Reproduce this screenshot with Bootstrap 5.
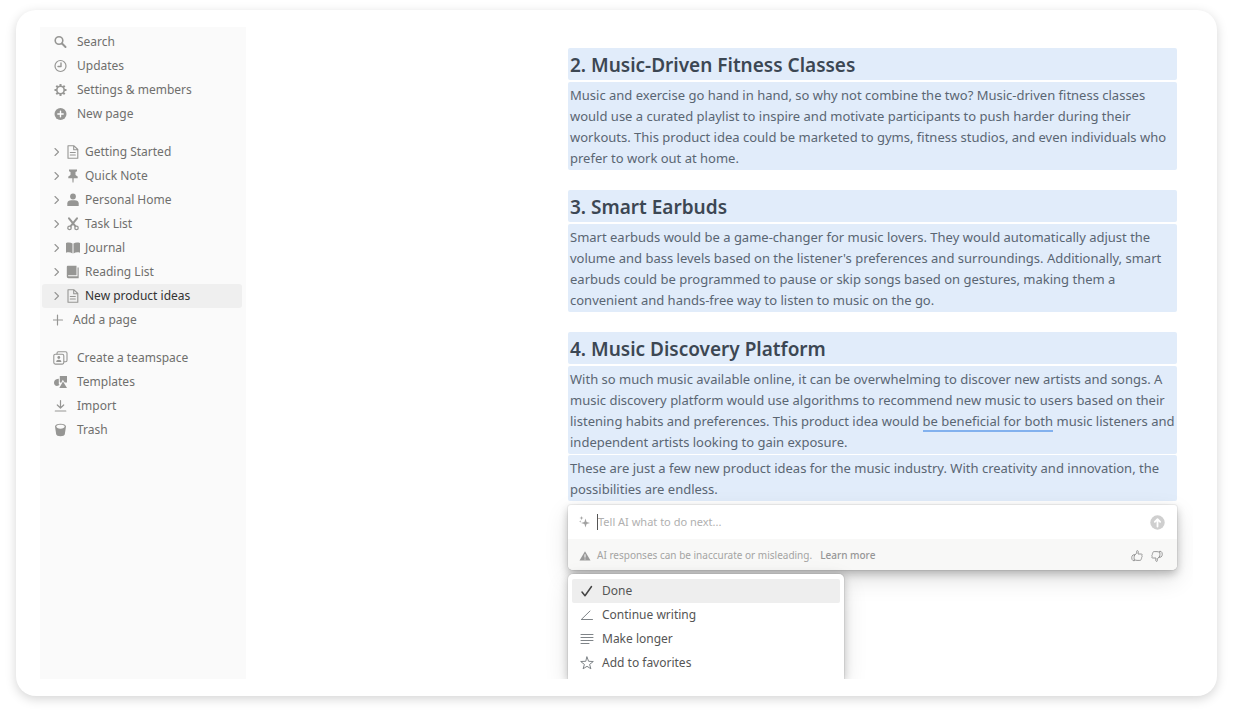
<!DOCTYPE html>
<html lang="en">
<head>
<meta charset="utf-8">
<meta name="viewport" content="width=device-width, initial-scale=1">
<title>New product ideas</title>
<link href="https://cdn.jsdelivr.net/npm/bootstrap@5.3.0/dist/css/bootstrap.min.css" rel="stylesheet">
<style>
  body { font-family: "Noto Sans", "Open Sans", sans-serif; background: #fff; color: #5a6673; }
  svg { display: block; flex: none; fill: none; stroke: currentColor; stroke-width: 1.4; stroke-linecap: round; stroke-linejoin: round; }
  svg .solid { fill: currentColor; stroke: none; }
  .app-window { margin: 10px 17px 23px 16px; padding: 17px 24px; border-radius: 20px; background: #fff; box-shadow: 0 3px 11px rgba(0,0,0,.17); }
  .side-panel { width: 206px; background: #fafafa; padding: 3px 4px 2px 2px; }
  .side-group + .side-group { margin-top: 14px; }
  .side-row { height: 24px; padding-left: 11px; font-size: 12px; line-height: 24px; border-radius: 3px; color: #6f6f6d; }
  .side-row svg { color: #969694; }
  .side-row a { color: inherit; text-decoration: none; }
  .side-row a.with-icon { gap: 9px; }
  .side-row.tree a.with-icon { gap: 5px; }
  .side-row.chosen { background: #efefef; color: #333; }
  .side-row .opener { border: 0; background: none; padding: 0 0 0 1px; width: 13px; }
  .main-area { overflow: hidden; min-width: 0; }
  .doc-column { width: 100%; max-width: 609px; margin: 21px 16px 0 auto; }
  .picked { background: #e1ecfa; border-radius: 2px; padding: 3px 2px 1px; margin: 0; }
  h2.picked { font-size: 19px; font-weight: 600; line-height: 28px; color: #3c4753; margin-bottom: 2px; }
  p.picked { font-size: 13px; line-height: 21px; }
  section + section { margin-top: 20px; }
  p.picked + p.picked { margin-top: 1px; }
  .hint-line { border-bottom: 2px solid #82b1ee; }
  .prompt-box { margin-top: 4px; background: #fff; border-radius: 3px 3px 5px 5px; overflow: hidden; box-shadow: 0 0 0 1px rgba(0,0,0,.05), 0 4px 9px rgba(0,0,0,.24), 0 9px 24px rgba(0,0,0,.12); }
  .prompt-row { height: 34px; padding: 0 12px 0 11px; }
  .prompt-row input { border: 0; outline: 0; padding: 0; background: none; font-size: 11px; color: #555; }
  .prompt-row input::placeholder { color: #b0b0b0; opacity: 1; }
  .text-caret { width: 1px; height: 16px; background: #555; margin-left: 7px; }
  .note-row { height: 31px; padding: 2px 14px 0 11px; background: #f8f8f7; font-size: 10px; color: #a4a4a3; }
  .note-words { margin-left: 6px; }
  .note-row a { color: #969696; font-weight: 500; text-decoration: none; }
  .plain-btn { border: 0; background: none; padding: 0; color: #8e8e8e; }
  .choice-menu { position: relative; width: 276px; margin-top: 4px; padding: 5px 4px 4px; background: #fff; border-radius: 5px 5px 0 0; box-shadow: 0 0 0 1px rgba(0,0,0,.05), 0 2px 8px rgba(0,0,0,.22), 0 9px 24px rgba(0,0,0,.12); }
  .choice-menu button { display: flex; align-items: center; gap: 8px; width: 100%; height: 24px; padding: 0 8px; border: 0; background: none; font-size: 12px; color: #555; text-align: left; border-radius: 2px; }
  .choice-menu button svg { color: #7f8488; stroke-width: 1; }
  .choice-menu button.current { background: #eeeeee; }
  .choice-menu button.current svg { color: #444; stroke-width: 1.5; }
</style>
</head>
<body>
<div class="app-window d-flex">
  <nav class="side-panel flex-shrink-0" aria-label="Workspace">
    <div class="side-group">
      <div class="side-row"><a href="#" class="with-icon d-flex align-items-center"><svg width="15" height="14" viewBox="0 0 15 14"><circle cx="6" cy="5.500" r="3.800" stroke-width="1.600"/><path d="M9 8.500 12.500 12" stroke-width="2"/></svg>Search</a></div>
      <div class="side-row"><a href="#" class="with-icon d-flex align-items-center"><svg width="15" height="14" viewBox="0 0 15 14"><circle cx="7.500" cy="7" r="5.500" stroke-width="1.200"/><path d="M8 4v3.500H5"/></svg>Updates</a></div>
      <div class="side-row"><a href="#" class="with-icon d-flex align-items-center"><svg width="15" height="14" viewBox="0 0 15 14"><circle cx="7.500" cy="7" r="3.700" stroke-width="1.600"/><path stroke-linecap="butt" stroke-width="2" d="M7.500 3.300V1M7.500 10.700V13M3.800 7H1.500M11.200 7h2.300M4.900 4.400 3.300 2.800M10.100 4.400l1.600-1.600M4.900 9.600l-1.600 1.600M10.100 9.600l1.600 1.600"/></svg>Settings &amp; members</a></div>
      <div class="side-row"><a href="#" class="with-icon d-flex align-items-center"><svg width="15" height="14" viewBox="0 0 15 14"><circle class="solid" cx="7.500" cy="7" r="6"/><path stroke="#fff" d="M7.500 4.300v5.400M4.800 7h5.400"/></svg>New page</a></div>
    </div>
    <div class="side-group">
      <div class="side-row tree d-flex align-items-center"><button class="opener" aria-label="Expand Getting Started"><svg width="6" height="8" viewBox="0 0 6 8"><path stroke-width="1.100" d="M1 .5 4.500 4 1 7.500"/></svg></button><a href="#" class="with-icon d-flex align-items-center"><svg width="14" height="14" viewBox="0 0 14 14"><path stroke-width="1.100" d="M2 .8h6l3.800 3.700v8.700H2zM7.700 1v3.800h4M4.300 7.500h5M4.300 10h5"/></svg>Getting Started</a></div>
      <div class="side-row tree d-flex align-items-center"><button class="opener" aria-label="Expand Quick Note"><svg width="6" height="8" viewBox="0 0 6 8"><path stroke-width="1.100" d="M1 .5 4.500 4 1 7.500"/></svg></button><a href="#" class="with-icon d-flex align-items-center"><svg width="14" height="14" viewBox="0 0 14 14"><path class="solid" d="M3 .5h8v1.800L9.500 3v3l2.200 1.400v1.800H7.700l-.2 4.300h-1l-.2-4.300h-4V7.400L4.500 6V3L3 2.300z"/></svg>Quick Note</a></div>
      <div class="side-row tree d-flex align-items-center"><button class="opener" aria-label="Expand Personal Home"><svg width="6" height="8" viewBox="0 0 6 8"><path stroke-width="1.100" d="M1 .5 4.500 4 1 7.500"/></svg></button><a href="#" class="with-icon d-flex align-items-center"><svg width="14" height="14" viewBox="0 0 14 14"><circle class="solid" cx="7" cy="3.500" r="2.900"/><path class="solid" d="M1.300 13v-2.500c0-2 1.700-3.200 4-3.200h3.400c2.300 0 4 1.200 4 3.200V13z"/></svg>Personal Home</a></div>
      <div class="side-row tree d-flex align-items-center"><button class="opener" aria-label="Expand Task List"><svg width="6" height="8" viewBox="0 0 6 8"><path stroke-width="1.100" d="M1 .5 4.500 4 1 7.500"/></svg></button><a href="#" class="with-icon d-flex align-items-center"><svg width="14" height="14" viewBox="0 0 14 14"><path stroke-width="2" d="M3 1.300 9.300 9.200M11 1.300 4.700 9.200"/><circle cx="3.500" cy="10.900" r="1.700" stroke-width="1.300"/><circle cx="10.500" cy="10.900" r="1.700" stroke-width="1.300"/></svg>Task List</a></div>
      <div class="side-row tree d-flex align-items-center"><button class="opener" aria-label="Expand Journal"><svg width="6" height="8" viewBox="0 0 6 8"><path stroke-width="1.100" d="M1 .5 4.500 4 1 7.500"/></svg></button><a href="#" class="with-icon d-flex align-items-center"><svg width="14" height="14" viewBox="0 0 14 14"><path class="solid" d="M0 2c2.500-.8 4.700-.6 6.500.4v10C4.500 11.300 2.300 11 0 11.800zM14 2c-2.500-.8-4.700-.6-6.500.4v10c2-1.100 4.200-1.400 6.500-.6z"/></svg>Journal</a></div>
      <div class="side-row tree d-flex align-items-center"><button class="opener" aria-label="Expand Reading List"><svg width="6" height="8" viewBox="0 0 6 8"><path stroke-width="1.100" d="M1 .5 4.500 4 1 7.500"/></svg></button><a href="#" class="with-icon d-flex align-items-center"><svg width="14" height="14" viewBox="0 0 14 14"><path class="solid" d="M2 .8h8.500v9.400H2.600c-.8 0-.8 1 0 1h8.900V2.500h1.200v10.700H2.500C1.400 13.200.8 12.500.8 11.500V2C.8 1.300 1.300.8 2 .8z"/></svg>Reading List</a></div>
      <div class="side-row tree chosen d-flex align-items-center"><button class="opener" aria-label="Expand New product ideas"><svg width="6" height="8" viewBox="0 0 6 8"><path stroke-width="1.100" d="M1 .5 4.500 4 1 7.500"/></svg></button><a href="#" class="with-icon d-flex align-items-center" aria-current="page"><svg width="14" height="14" viewBox="0 0 14 14"><path stroke-width="1.100" d="M2 .8h6l3.800 3.700v8.700H2zM7.700 1v3.800h4M4.300 7.500h5M4.300 10h5"/></svg>New product ideas</a></div>
      <div class="side-row"><a href="#" class="with-icon d-flex align-items-center"><svg width="11" height="12" viewBox="0 0 11 12"><path stroke-width="1.200" d="M4.500 1v10M-.5 6h10"/></svg>Add a page</a></div>
    </div>
    <div class="side-group">
      <div class="side-row"><a href="#" class="with-icon d-flex align-items-center"><svg width="15" height="14" viewBox="0 0 15 14"><rect x=".8" y="3.300" width="10" height="9.800" rx="1.500" stroke-width="1.100"/><path stroke-width="1.100" d="M4 3V2.200C4 1.400 4.500.8 5.300.8h7.200c.9 0 1.500.6 1.500 1.500v7c0 .9-.5 1.400-1.300 1.400h-1.600"/><circle class="solid" cx="5.800" cy="6.500" r="1.400"/><path class="solid" d="M3.200 11c0-1.500 1-2.300 2.600-2.300s2.600.8 2.600 2.300z"/></svg>Create a teamspace</a></div>
      <div class="side-row"><a href="#" class="with-icon d-flex align-items-center"><svg width="15" height="14" viewBox="0 0 15 14"><path class="solid" d="M6.800 1h7.200v6.500h-2.300L9.800 4.800 8 8 6.800 7zM5.800 3.800v5.400l.8.600C6 10.500 5 11 4 11 2.200 11 1 9.500 1 7.800c0-2 1.200-3.500 3.200-3.800zM10 6.500 14 13H6.300z"/></svg>Templates</a></div>
      <div class="side-row"><a href="#" class="with-icon d-flex align-items-center"><svg width="15" height="14" viewBox="0 0 15 14"><path stroke-width="1.200" d="M7.500 1.500v7.300M4.300 6l3.200 3 3.200-3M2.300 12h10.500"/></svg>Import</a></div>
      <div class="side-row"><a href="#" class="with-icon d-flex align-items-center"><svg width="15" height="14" viewBox="0 0 15 14"><path class="solid" fill-rule="evenodd" d="M2 3.500C2 1.800 4.300.7 7.500.7S13 1.800 13 3.500l-1.200 7.700c-.2 1.300-1.900 2-4.300 2s-4.100-.7-4.300-2zM3.300 3.600c0 1.200 1.800 2.100 4.200 2.100s4.200-.9 4.200-2.100-1.800-1.800-4.200-1.800-4.200.6-4.200 1.800z"/></svg>Trash</a></div>
    </div>
  </nav>

  <main class="main-area flex-grow-1">
    <div class="doc-column">
      <section>
        <h2 class="picked">2. Music-Driven Fitness Classes</h2>
        <p class="picked">Music and exercise go hand in hand, so why not combine the two? Music-driven fitness classes would use a curated playlist to inspire and motivate participants to push harder during their workouts. This product idea could be marketed to gyms, fitness studios, and even individuals who prefer to work out at home.</p>
      </section>
      <section>
        <h2 class="picked">3. Smart Earbuds</h2>
        <p class="picked">Smart earbuds would be a game-changer for music lovers. They would automatically adjust the volume and bass levels based on the listener's preferences and surroundings. Additionally, smart earbuds could be programmed to pause or skip songs based on gestures, making them a convenient and hands-free way to listen to music on the go.</p>
      </section>
      <section>
        <h2 class="picked">4. Music Discovery Platform</h2>
        <p class="picked">With so much music available online, it can be overwhelming to discover new artists and songs. A music discovery platform would use algorithms to recommend new music to users based on their listening habits and preferences. This product idea would <span class="hint-line">be beneficial for both</span> music listeners and independent artists looking to gain exposure.</p>
        <p class="picked">These are just a few new product ideas for the music industry. With creativity and innovation, the possibilities are endless.</p>
      </section>

      <form class="prompt-box">
        <div class="prompt-row d-flex align-items-center">
          <svg width="11" height="12" viewBox="0 0 11 12" color="#a2a2a2"><path class="solid" d="M6.500 2.500 7.600 5.900l3.400 1.100-3.400 1.100L6.500 11.500 5.400 8.100 2 7l3.400-1.100zM2.500 0l.5 1.600 1.500.5-1.500.5-.5 1.600L2 2.600.5 2.100 2 1.600zM1.200 4.300l.3.900.9.300-.9.300-.3.900-.3-.9-.9-.3.900-.3z"/></svg>
          <span class="text-caret"></span>
          <input class="flex-grow-1" type="text" aria-label="Tell AI what to do next" placeholder="Tell AI what to do next...">
          <button type="button" class="plain-btn" aria-label="Send"><svg width="15" height="15" viewBox="0 0 15 15"><circle cx="7.500" cy="7.500" r="7.200" fill="#cfcfcf" stroke="none"/><path stroke="#fff" stroke-width="1.800" d="M7.500 11.500v-7M4.800 6.800l2.700-2.700 2.700 2.700"/></svg></button>
        </div>
        <div class="note-row d-flex align-items-center">
          <svg width="12" height="10" viewBox="0 0 12 10" color="#999"><path class="solid" d="M6 .3 11.500 9.500H.5z"/><path stroke="#fff" stroke-width="1" d="M6 3.700v2.500M6 8v.1"/></svg>
          <span class="text-nowrap note-words">AI responses can be inaccurate or misleading.</span>
          <a href="#" class="ms-2 text-nowrap">Learn more</a>
          <button type="button" class="plain-btn ms-auto" aria-label="Good response"><svg width="12" height="12" viewBox="0 0 12 12"><path id="thumb" stroke-width=".9" d="M3.500 5.500 5.700 3V1.200c0-.9 1.600-.9 1.600.5L7 4h3.200c1.200 0 1.300 1.200.6 1.600.6.5.4 1.400-.2 1.700.4.600.1 1.300-.5 1.500.2.800-.2 1.600-1.200 1.600H6c-1 0-1.500-.5-2.500-.6M3.700 4.900H2C.3 6 .3 9.500 2 10.600h1.700C2.800 9 2.800 6.500 3.700 4.900z"/></svg></button>
          <button type="button" class="plain-btn ms-2" aria-label="Bad response"><svg width="12" height="12" viewBox="0 0 12 12"><use href="#thumb" transform="rotate(180 6 6)"/></svg></button>
        </div>
      </form>

      <div class="choice-menu">
        <button type="button" class="current"><svg width="14" height="14" viewBox="0 0 14 14"><path d="M2 8l3 3.700L11.500 2.500"/></svg>Done</button>
        <button type="button"><svg width="14" height="14" viewBox="0 0 14 14"><path d="M1.500 11.500h11M1.500 11.300 10 3"/></svg>Continue writing</button>
        <button type="button"><svg width="14" height="14" viewBox="0 0 14 14"><path d="M1 2.500h12M1 5.500h12M1 8.500h12M1 11.500h8"/></svg>Make longer</button>
        <button type="button"><svg width="14" height="14" viewBox="0 0 14 14"><path d="m7 1 1.600 4.300 4.700.2-3.700 2.900 1.300 4.400L7 10.300l-3.900 2.500 1.300-4.400L.7 5.500l4.700-.2z"/></svg>Add to favorites</button>
      </div>
    </div>
  </main>
</div>
<script src="https://cdn.jsdelivr.net/npm/bootstrap@5.3.0/dist/js/bootstrap.bundle.min.js"></script>
</body>
</html>
